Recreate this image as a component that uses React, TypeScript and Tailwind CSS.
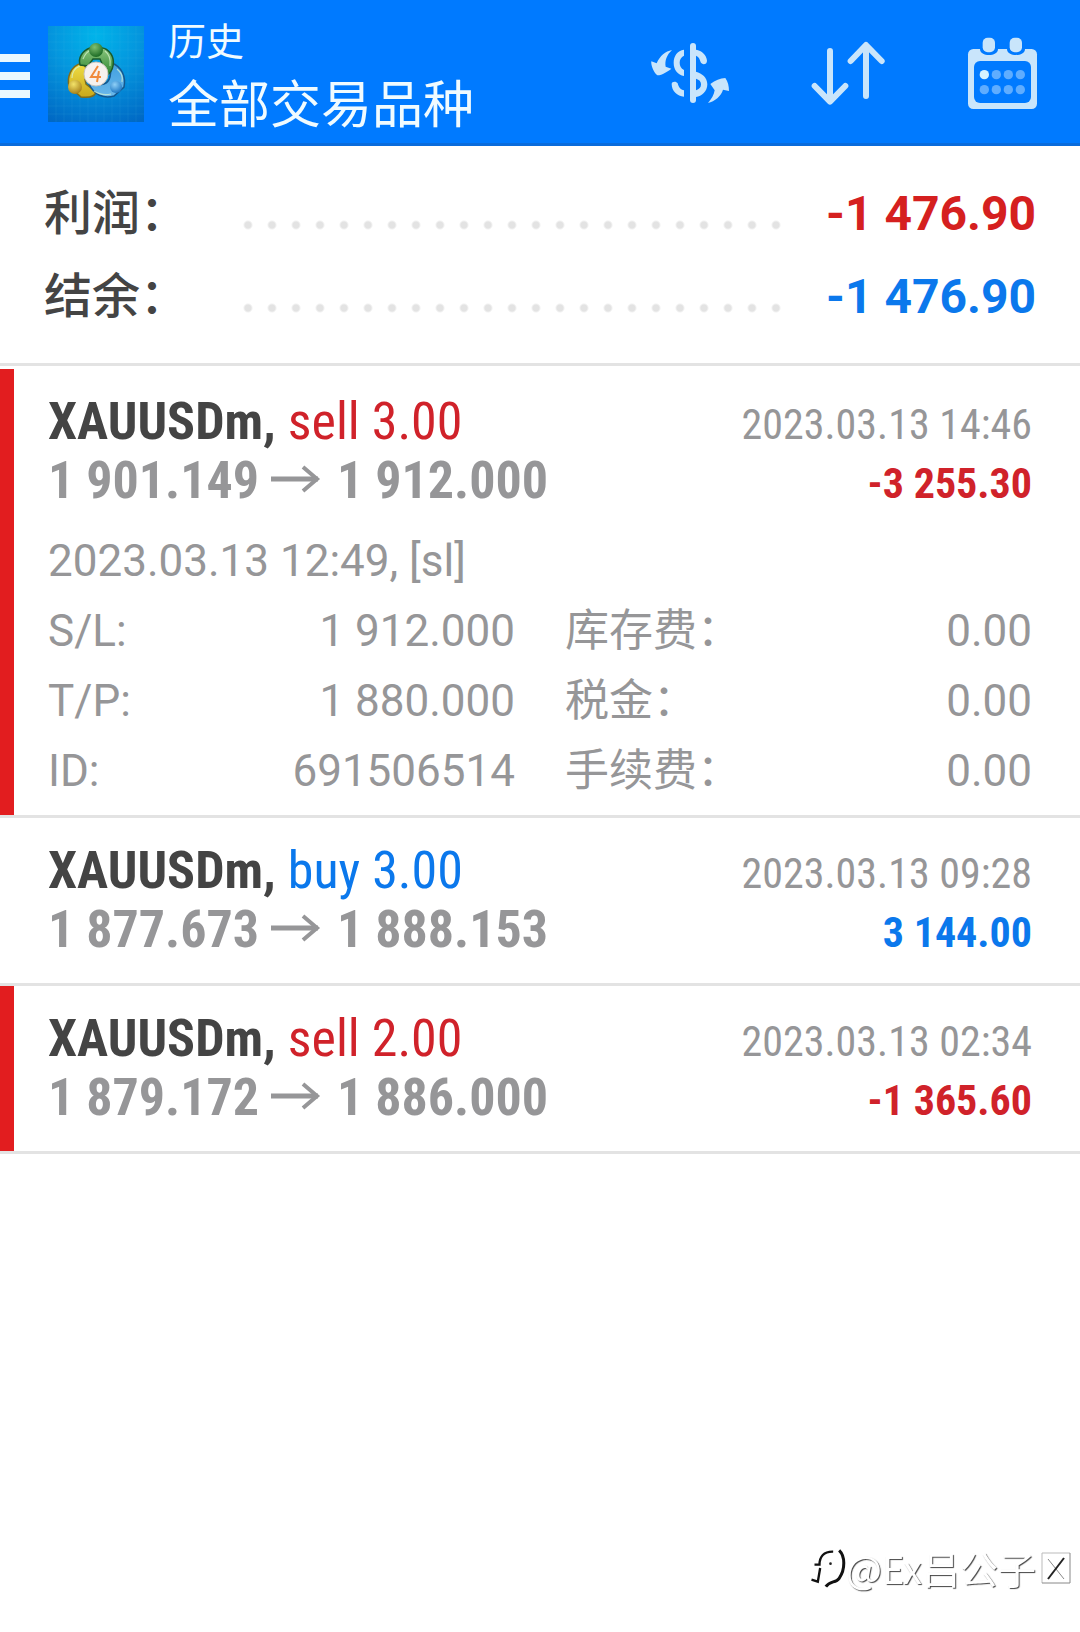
import type { ReactNode } from "react"

type Detail = { label: string; value: string }

type Deal = {
  symbol: string
  side: "buy" | "sell"
  volume: string
  open: string
  close: string
  time: string
  profit: string
  marked?: boolean
  comment?: string
  details?: Detail[]
}

const deals: Deal[] = [
  {
    symbol: "XAUUSDm",
    side: "sell",
    volume: "3.00",
    open: "1 901.149",
    close: "1 912.000",
    time: "2023.03.13 14:46",
    profit: "-3 255.30",
    marked: true,
    comment: "2023.03.13 12:49, [sl]",
    details: [
      { label: "S/L:", value: "1 912.000" },
      { label: "库存费：", value: "0.00" },
      { label: "T/P:", value: "1 880.000" },
      { label: "税金：", value: "0.00" },
      { label: "ID:", value: "691506514" },
      { label: "手续费：", value: "0.00" },
    ],
  },
  {
    symbol: "XAUUSDm",
    side: "buy",
    volume: "3.00",
    open: "1 877.673",
    close: "1 888.153",
    time: "2023.03.13 09:28",
    profit: "3 144.00",
  },
  {
    symbol: "XAUUSDm",
    side: "sell",
    volume: "2.00",
    open: "1 879.172",
    close: "1 886.000",
    time: "2023.03.13 02:34",
    profit: "-1 365.60",
    marked: true,
  },
]

function Logo() {
  return (
    <svg viewBox="0 0 96 96" className="size-24 shrink-0" aria-hidden="true">
      <defs>
        <radialGradient id="sky" cx="50%" cy="10%" r="100%">
          <stop offset="0" stopColor="#00b4ea" />
          <stop offset="0.45" stopColor="#0496de" />
          <stop offset="1" stopColor="#0068c4" />
        </radialGradient>
        <linearGradient id="green" x1="0" y1="0" x2="0" y2="1">
          <stop offset="0" stopColor="#8cc67e" />
          <stop offset="1" stopColor="#2c8530" />
        </linearGradient>
        <linearGradient id="yellow" x1="0" y1="0" x2="0" y2="1">
          <stop offset="0" stopColor="#f0df45" />
          <stop offset="1" stopColor="#c9a81c" />
        </linearGradient>
        <linearGradient id="blue" x1="0" y1="0" x2="0" y2="1">
          <stop offset="0" stopColor="#3f9fe0" />
          <stop offset="1" stopColor="#6bb8ea" />
        </linearGradient>
        <radialGradient id="headGreen" cx="40%" cy="30%" r="70%">
          <stop offset="0" stopColor="#7fc070" />
          <stop offset="1" stopColor="#1c6b25" />
        </radialGradient>
        <radialGradient id="headYellow" cx="40%" cy="30%" r="70%">
          <stop offset="0" stopColor="#f3e36a" />
          <stop offset="1" stopColor="#a8821a" />
        </radialGradient>
        <radialGradient id="headBlue" cx="40%" cy="30%" r="70%">
          <stop offset="0" stopColor="#8fd0f7" />
          <stop offset="1" stopColor="#1f78c4" />
        </radialGradient>
      </defs>
      <rect width="96" height="96" fill="url(#sky)" />
      <path
        d="M8 0V96M16 0V96M24 0V96M32 0V96M40 0V96M48 0V96M56 0V96M64 0V96M72 0V96M80 0V96M88 0V96M0 8H96M0 16H96M0 24H96M0 32H96M0 40H96M0 48H96M0 56H96M0 64H96M0 72H96M0 80H96M0 88H96"
        stroke="#5fd0f5"
        strokeOpacity="0.1"
      />
      {/* Tres figuras entrelazadas */}
      <path d="M34 37C22 40 19 52 21 60L33 71C42 72 47 70 48 66L38 58C36 52 37 48 40 44Z" fill="url(#yellow)" stroke="#806c1c" strokeWidth="1.5" />
      <path d="M64 37C74 41 78 51 76 61L66 70C56 73 46 69 41 58L48 57C54 60 60 58 62 51Z" fill="url(#blue)" stroke="#14588f" strokeWidth="1.5" />
      <path d="M42 22C34 25 30 32 32 39L40 40L45 33H52L59 49C66 45 67 34 63 28C60 24 57 22 54 22Z" fill="url(#green)" stroke="#1b5c2b" strokeWidth="1.5" />
      <path d="M35 33C37 28 40 25 43 24M57 25C61 28 63 32 62 40M24 52C24 46 27 42 32 40M69 43C74 47 75 52 74 56M46 65C52 69 58 69 63 68" fill="none" stroke="#d9f3d2" strokeOpacity="0.7" strokeWidth="1.2" />
      <circle cx="48" cy="24" r="7" fill="url(#headGreen)" />
      <circle cx="27" cy="61" r="7" fill="url(#headYellow)" />
      <circle cx="68" cy="61" r="6" fill="url(#headBlue)" />
      <circle cx="48" cy="48" r="12" fill="#f6f1ee" stroke="#c9c4bd" />
      <path d="M50 40L43 51H53M51 45L49 56" fill="none" stroke="#f08a3c" strokeWidth="2" />
    </svg>
  )
}

function DollarIcon() {
  return (
    <svg viewBox="60 60 240 192" className="h-16 w-20" fill="#c9e5fb" aria-hidden="true">
      <rect x="180" y="66" width="18" height="180" rx="9" />
      <path d="M162 86C142 88 131 105 131 125C131 147 144 162 162 165V147C153 142 149 134 149 125C149 116 153 108 162 104Z" />
      <path d="M125 189C125 181 139 180 143 187C146 200 152 206 162 208V227C142 226 125 210 125 189Z" />
      <path d="M198 86C215 88 230 102 231 119C231 132 216 132 212 124C209 113 206 107 198 104Z" />
      <path fillRule="evenodd" d="M198 152C216 157 232 169 232 190C232 212 215 226 198 228ZM198 173V208C208 205 213 200 213 190C213 181 208 176 198 173Z" />
      <path d="M126 87C106 91 90 104 80 127L64 121C62 130 70 154 82 163C98 162 112 152 124 143L107 137C104 119 110 102 126 87Z" />
      <path d="M234 246C245 234 252 221 254 208L241 189C256 178 270 172 286 171C294 182 297 196 297 210L279 206C274 225 254 241 234 246Z" />
    </svg>
  )
}

function SortIcon() {
  return (
    <svg viewBox="537 60 225 198" className="h-[66px] w-[75px]" fill="none" stroke="#c9e5fb" strokeWidth="18" strokeLinecap="round" strokeLinejoin="round" aria-hidden="true">
      <path d="M594 93V244M548 198L594 245L640 198" />
      <path d="M702 228V76M656 123L702 75L749 123" />
    </svg>
  )
}

function CalendarIcon() {
  return (
    <svg viewBox="1011 45 213 222" className="h-[74px] w-[71px]" fill="#c9e5fb" aria-hidden="true">
      <rect x="1014" y="84" width="207" height="180" rx="16" />
      <rect x="1032" y="120" width="171" height="126" rx="18" fill="#007aff" />
      <path d="M1050 80V84C1050 108 1104 108 1104 84V80ZM1131 80V84C1131 108 1185 108 1185 84V80Z" fill="#007aff" />
      <rect x="1058" y="50" width="37" height="44" rx="15" />
      <rect x="1139" y="50" width="37" height="44" rx="15" />
      <circle cx="1063" cy="161" r="14" fill="#d6f3ff" />
      <g fill="#5fadff">
        <circle cx="1099" cy="161" r="14" />
        <circle cx="1135" cy="161" r="14" />
        <circle cx="1171" cy="161" r="14" />
        <circle cx="1063" cy="206" r="14" />
        <circle cx="1099" cy="206" r="14" />
        <circle cx="1135" cy="206" r="14" />
        <circle cx="1171" cy="206" r="14" />
      </g>
    </svg>
  )
}

function ArrowIcon() {
  return (
    <svg viewBox="0 0 50 40" className="mr-1 inline-block h-10 w-[50px] align-baseline" fill="none" stroke="currentColor" strokeWidth="5" aria-label="→">
      <path d="M0 21H47" />
      <path d="M32 9L46 21L32 33" strokeWidth="4" />
    </svg>
  )
}

function IconButton({ label, children }: { label: string; children: ReactNode }) {
  return (
    <button type="button" aria-label={label} className="cursor-pointer">
      {children}
    </button>
  )
}

function Header() {
  return (
    <header className="flex items-center border-b-3 border-[#0a6cdc] bg-[#007aff] pt-1 pr-[42px] text-[#f0fbff]">
      <button type="button" aria-label="菜单" className="mr-[18px] flex w-[30px] flex-col gap-[10px] pt-1">
        <span className="h-2 w-full bg-[#eaf8ff]" />
        <span className="h-2 w-full bg-[#eaf8ff]" />
        <span className="h-2 w-full bg-[#eaf8ff]" />
      </button>
      <Logo />
      <div className="ml-6 flex-1 pt-2 pb-1">
        <p className="text-[38px] leading-[60px]">历史</p>
        <h1 className="text-[51px] leading-[67px]">全部交易品种</h1>
      </div>
      <div className="flex items-center gap-[81px] pb-0.5">
        <IconButton label="货币"><DollarIcon /></IconButton>
        <IconButton label="排序"><SortIcon /></IconButton>
        <IconButton label="日期"><CalendarIcon /></IconButton>
      </div>
    </header>
  )
}

function SummaryRow({ label, value, color }: { label: string; value: string; color: string }) {
  return (
    <div className="flex text-[48px] leading-[83px]">
      <dt className="w-48 font-medium text-[#444444]">{label}</dt>
      {/* Línea de puntos */}
      <dd className="flex flex-1" aria-hidden="true">
        <span className="mt-[41px] h-6 flex-1 bg-[radial-gradient(circle,#e3e3e3_3px,transparent_5px)] bg-size-[24px_24px]" />
      </dd>
      <dd className={`w-[248px] text-right font-bold ${color}`}>{value}</dd>
    </div>
  )
}

function DealRow({ deal }: { deal: Deal }) {
  const sideColor = deal.side === "buy" ? "text-[#0b78ec]" : "text-[#d0222a]"
  const profitColor = deal.profit.startsWith("-") ? "text-[#d0222a]" : "text-[#0b78ec]"

  return (
    <li className="border-b-3 border-[#e3e3e3]">
      <article className={`border-l-14 pr-12 pl-[34px] pt-[25px] ${deal.marked ? "border-[#e21d1f]" : "border-white"} ${deal.details ? "pb-[9px]" : "pb-[22px]"}`}>
        <div className="font-['Roboto_Condensed',Roboto,sans-serif] leading-[56px]">
          <div className="flex items-baseline justify-between">
            <h2 className="text-[52px] font-bold text-[#444444]">
              {deal.symbol}, <span className={`font-normal ${sideColor}`}>{deal.side} {deal.volume}</span>
            </h2>
            <time className="text-[42px] text-[#969698]">{deal.time}</time>
          </div>
          <div className="flex items-baseline justify-between font-bold">
            <p className="text-[52px] text-[#969698]">
              {deal.open} <ArrowIcon /> {deal.close}
            </p>
            <p className={`text-[42px] ${profitColor}`}>{deal.profit}</p>
          </div>
        </div>
        {deal.details && (
          <div className="pt-[14px] text-[44px] leading-[70px] text-[#969698]">
            <p>{deal.comment}</p>
            <dl className="grid grid-cols-2 gap-x-[50px]">
              {deal.details.map((item) => (
                <div key={item.label} className="flex justify-between">
                  <dt>{item.label}</dt>
                  <dd>{item.value}</dd>
                </div>
              ))}
            </dl>
          </div>
        )}
      </article>
    </li>
  )
}

function Watermark() {
  return (
    <div className="fixed right-2 bottom-[38px] flex items-center font-['Noto_Sans_CJK_SC',sans-serif] text-[38px] leading-[52px] text-white [text-shadow:1px_1px_1px_#444444]">
      <svg viewBox="44 48 104 120" className="h-10 w-[35px]" fill="none" stroke="#111111" aria-hidden="true">
        <path d="M54 98H69C69 74 82 58 110 59M71 108L64 149L45 143" strokeWidth="7" />
        <path d="M128 55C146 72 147 112 128 139C118 154 100 145 88 164" strokeWidth="9" />
        <circle cx="102" cy="95" r="4" fill="#222222" stroke="none" />
      </svg>
      <span>@Ex吕公子</span>
      <svg viewBox="0 0 32 34" className="ml-1 h-[34px] w-8" fill="none" aria-hidden="true">
        <path d="M2 32V2H30" stroke="#bbbbbb" />
        <path d="M30 2V32H2M8 8L24 28" stroke="#888888" />
        <path d="M24 7L8 28" stroke="#222222" strokeWidth="2" />
      </svg>
    </div>
  )
}

export default function App() {
  return (
    <div className="min-h-screen bg-white font-[Roboto,'Noto_Sans_CJK_SC',sans-serif]" lang="zh-CN">
      <Header />
      <main>
        <dl className="border-b-3 border-[#e3e3e3] px-11 pt-[26px] pb-[25px]">
          <SummaryRow label="利润：" value="-1 476.90" color="text-[#d5201f]" />
          <SummaryRow label="结余：" value="-1 476.90" color="text-[#0b78ec]" />
        </dl>
        <ul className="pt-[3px]">
          {deals.map((deal) => (
            <DealRow key={deal.time} deal={deal} />
          ))}
        </ul>
      </main>
      <Watermark />
    </div>
  )
}
